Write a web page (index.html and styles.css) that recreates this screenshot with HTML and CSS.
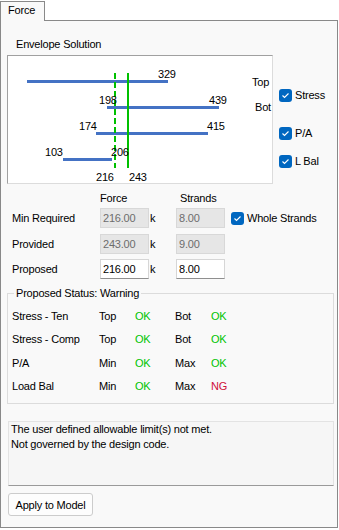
FILE: index.html
```html
<!DOCTYPE html>
<html>
<head>
    <title>Force</title>
    <link rel="stylesheet" href="styles.css">
</head>
<body>
    <div class="tabs">
        <div class="tab">Force</div>
    </div>
    <div class="panel">
        <div class="section-title">Envelope Solution</div>

        <div class="envelope">
            <div class="chart">
                <svg class="plot" width="264" height="127" viewBox="8 56 264 127">
                    <g class="bars">
                        <line x1="27" y1="81.5" x2="168" y2="81.5"/>
                        <line x1="107" y1="107.5" x2="219" y2="107.5"/>
                        <line x1="96" y1="133.5" x2="208" y2="133.5"/>
                        <line x1="63" y1="159.5" x2="112" y2="159.5"/>
                    </g>
                    <line class="limit dashed" x1="115" y1="73" x2="115" y2="168"/>
                    <line class="limit" x1="128" y1="73" x2="128" y2="168"/>
                    <text x="158" y="78">329</text>
                    <text x="99" y="104">198</text>
                    <text x="209" y="104">439</text>
                    <text x="79" y="130">174</text>
                    <text x="207" y="130">415</text>
                    <text x="45" y="156">103</text>
                    <text x="111" y="156">206</text>
                    <text x="96" y="181">216</text>
                    <text x="129" y="181">243</text>
                    <text x="252" y="86">Top</text>
                    <text x="255" y="111">Bot</text>
                </svg>
            </div>
            <div class="chart-options">
                <label class="check"><span class="box"><svg width="13" height="13" viewBox="0 0 13 13"><polyline points="3.5,6.5 5.5,8.5 9.5,4.5"/></svg></span>Stress</label>
                <label class="check pa"><span class="box"><svg width="13" height="13" viewBox="0 0 13 13"><polyline points="3.5,6.5 5.5,8.5 9.5,4.5"/></svg></span>P/A</label>
                <label class="check lbal"><span class="box"><svg width="13" height="13" viewBox="0 0 13 13"><polyline points="3.5,6.5 5.5,8.5 9.5,4.5"/></svg></span>L Bal</label>
            </div>
        </div>

        <div class="force-form">
            <div class="force-head">
                <span class="head-force">Force</span>
                <span class="head-strands">Strands</span>
            </div>
            <div class="force-row">
                <span class="row-label">Min Required</span>
                <input class="field" type="text" value="216.00" disabled>
                <span class="unit">k</span>
                <input class="field" type="text" value="8.00" disabled>
                <label class="check whole"><span class="box"><svg width="13" height="13" viewBox="0 0 13 13"><polyline points="3.5,6.5 5.5,8.5 9.5,4.5"/></svg></span>Whole Strands</label>
            </div>
            <div class="force-row">
                <span class="row-label">Provided</span>
                <input class="field" type="text" value="243.00" disabled>
                <span class="unit">k</span>
                <input class="field" type="text" value="9.00" disabled>
            </div>
            <div class="force-row">
                <span class="row-label">Proposed</span>
                <input class="field" type="text" value="216.00">
                <span class="unit">k</span>
                <input class="field" type="text" value="8.00">
            </div>
        </div>

        <fieldset class="status">
            <legend>Proposed Status: Warning</legend>
            <div class="status-grid">
                <span>Stress - Ten</span><span>Top</span><span class="ok">OK</span><span>Bot</span><span class="ok">OK</span>
                <span>Stress - Comp</span><span>Top</span><span class="ok">OK</span><span>Bot</span><span class="ok">OK</span>
                <span>P/A</span><span>Min</span><span class="ok">OK</span><span>Max</span><span class="ok">OK</span>
                <span>Load Bal</span><span>Min</span><span class="ok">OK</span><span>Max</span><span class="ng">NG</span>
            </div>
        </fieldset>

        <div class="message">The user defined allowable limit(s) not met.<br>Not governed by the design code.</div>

        <button class="apply" type="button">Apply to Model</button>
    </div>
</body>
</html>
```

FILE: styles.css
```css
body {
    margin: 0;
    background-color: white;
    color: black;
    font-family: "Liberation Sans", Arial, sans-serif;
    font-size: 11px;
    letter-spacing: -0.2px;
}

.tabs {
    height: 20px;
    display: flex;
}

.tab {
    position: relative;
    top: 1px;
    z-index: 1;
    box-sizing: border-box;
    width: 45px;
    height: 20px;
    border: 1px solid #898989;
    border-bottom: none;
    background-color: #f9f9f9;
    padding-left: 7px;
    line-height: 17px;
}

.panel {
    box-sizing: border-box;
    width: 338px;
    height: 508px;
    border: 1px solid #898989;
    background-color: #f9f9f9;
    padding-top: 16px;
}

.section-title {
    line-height: 14px;
    padding-left: 15px;
    margin-bottom: 4px;
}

/* chart + legend checkboxes */
.envelope {
    display: flex;
    gap: 6px;
    margin-left: 6px;
}

.chart {
    box-sizing: border-box;
    width: 266px;
    height: 129px;
    border: 1px solid;
    border-color: #a0a0a0 #dcdcdc #dcdcdc #a0a0a0;
    background-color: white;
}

.plot {
    display: block;
}

.plot text {
    font-family: "Liberation Sans", Arial, sans-serif;
    font-size: 11px;
    fill: black;
}

.bars line {
    stroke: #4472c4;
    stroke-width: 3;
}

.limit {
    stroke: #00c000;
    stroke-width: 2;
}

.limit.dashed {
    stroke-dasharray: 6 3;
}

.chart-options {
    display: flex;
    flex-direction: column;
    padding-top: 33px;
}

.check {
    display: flex;
    align-items: center;
    gap: 3px;
    height: 15px;
    line-height: 15px;
    white-space: nowrap;
}

.check.pa {
    margin-top: 23px;
}

.check.lbal {
    margin-top: 13px;
}

.box {
    display: inline-flex;
    width: 13px;
    height: 13px;
    border-radius: 3px;
    background-color: #0067c0;
}

.box polyline {
    fill: none;
    stroke: white;
    stroke-width: 1.1;
}

/* force / strands rows */
.force-form {
    margin-top: 7px;
    padding-left: 11px;
}

.force-head {
    display: flex;
    height: 14px;
    line-height: 14px;
    padding-left: 88px;
}

.head-force {
    width: 80px;
}

.force-row {
    display: flex;
    align-items: center;
    height: 20px;
    margin-top: 6px;
}

.force-head + .force-row {
    margin-top: 3px;
}

.force-row:last-child {
    margin-top: 5px;
}

.row-label {
    width: 88px;
}

.field {
    box-sizing: border-box;
    width: 49px;
    height: 20px;
    margin: 0;
    padding: 0 2px;
    border: 1px solid #d6d6d6;
    border-bottom-color: #8f8f8f;
    border-radius: 0;
    background-color: white;
    color: black;
    font-family: inherit;
    font-size: 11px;
    letter-spacing: inherit;
    outline: none;
}

.field:disabled {
    border-color: #d8d8d8;
    background-color: #e6e6e6;
    color: #6d6d6d;
}

.unit {
    width: 26px;
    padding-left: 1px;
}

.check.whole {
    margin-left: 6px;
}

/* proposed status group */
.status {
    margin: 7px 3px 0 6px;
    padding: 0 4px 5px 4px;
    border: 1px solid #dcdcdc;
}

.status legend {
    margin-left: 2px;
    padding: 0 2px;
    line-height: 14px;
}

.status-grid {
    display: grid;
    grid-template-columns: 87px 36px 40px 36px auto;
    grid-auto-rows: 23.5px;
    align-items: center;
    padding-top: 4px;
}

.ok {
    color: #00c400;
}

.ng {
    color: #d0103a;
}

.message {
    box-sizing: border-box;
    height: 65px;
    margin: 17px 3px 0 7px;
    padding: 0 2px;
    border: 1px solid #e3e3e3;
    border-bottom-color: #9a9a9a;
    background-color: #f6f6f6;
    line-height: 15px;
}

.apply {
    display: block;
    box-sizing: border-box;
    width: 85px;
    height: 23px;
    margin: 7px 0 0 7px;
    padding: 0;
    border: 1px solid #cccccc;
    border-radius: 3px;
    background-color: #fdfdfd;
    color: black;
    font-family: inherit;
    font-size: 11px;
    letter-spacing: inherit;
}
```
